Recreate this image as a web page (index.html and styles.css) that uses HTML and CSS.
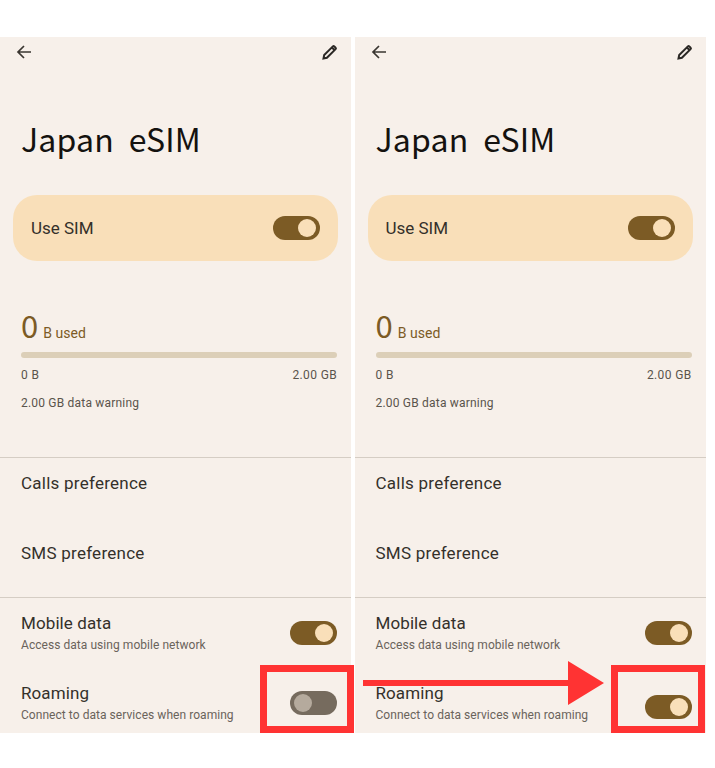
FILE: index.html
```html
<!DOCTYPE html>
<html lang="en">
<head>
    <meta charset="utf-8">
    <meta name="viewport" content="width=device-width, initial-scale=1.0">
    <title>Japan eSIM roaming</title>
    <link rel="stylesheet" href="styles.css">
</head>
<body>
    <div id="container">
        <div class="phone">
            <div class="top-bar">
                <svg class="icon" viewBox="0 0 16 16"><path d="M15 8H2M8 2L2 8l6 6"/></svg>
                <svg class="icon pencil" viewBox="0 0 16 16"><path d="M1.5 14.5l.7-3.4 8.7-8.7a1 1 0 0 1 1.4 0l1.3 1.3a1 1 0 0 1 0 1.4l-8.7 8.7zM10 3.6l2.4 2.4"/></svg>
            </div>
            <h1 class="title">Japan&nbsp; eSIM</h1>
            <div class="sim-card">
                <span class="sim-label">Use SIM</span>
                <div class="toggle on"><div class="knob"></div></div>
            </div>
            <div class="usage">
                <div class="used"><span class="used-num">0</span><span class="used-unit">B used</span></div>
                <div class="bar"></div>
                <div class="bar-labels"><span>0 B</span><span>2.00 GB</span></div>
                <div class="warning">2.00 GB data warning</div>
            </div>
            <div class="section">
                <div class="pref-row">Calls preference</div>
                <div class="pref-row">SMS preference</div>
            </div>
            <div class="section toggles">
                <div class="toggle-row">
                    <div class="row-text">
                        <div class="row-title">Mobile data</div>
                        <div class="row-sub">Access data using mobile network</div>
                    </div>
                    <div class="toggle on"><div class="knob"></div></div>
                </div>
                <div class="toggle-row">
                    <div class="row-text">
                        <div class="row-title">Roaming</div>
                        <div class="row-sub">Connect to data services when roaming</div>
                    </div>
                    <div class="toggle off"><div class="knob"></div></div>
                </div>
            </div>
            <div class="highlight left"></div>
        </div>
        <div class="phone">
            <div class="top-bar">
                <svg class="icon" viewBox="0 0 16 16"><path d="M15 8H2M8 2L2 8l6 6"/></svg>
                <svg class="icon pencil" viewBox="0 0 16 16"><path d="M1.5 14.5l.7-3.4 8.7-8.7a1 1 0 0 1 1.4 0l1.3 1.3a1 1 0 0 1 0 1.4l-8.7 8.7zM10 3.6l2.4 2.4"/></svg>
            </div>
            <h1 class="title">Japan&nbsp; eSIM</h1>
            <div class="sim-card">
                <span class="sim-label">Use SIM</span>
                <div class="toggle on"><div class="knob"></div></div>
            </div>
            <div class="usage">
                <div class="used"><span class="used-num">0</span><span class="used-unit">B used</span></div>
                <div class="bar"></div>
                <div class="bar-labels"><span>0 B</span><span>2.00 GB</span></div>
                <div class="warning">2.00 GB data warning</div>
            </div>
            <div class="section">
                <div class="pref-row">Calls preference</div>
                <div class="pref-row">SMS preference</div>
            </div>
            <div class="section toggles">
                <div class="toggle-row">
                    <div class="row-text">
                        <div class="row-title">Mobile data</div>
                        <div class="row-sub">Access data using mobile network</div>
                    </div>
                    <div class="toggle on"><div class="knob"></div></div>
                </div>
                <div class="toggle-row">
                    <div class="row-text">
                        <div class="row-title">Roaming</div>
                        <div class="row-sub">Connect to data services when roaming</div>
                    </div>
                    <div class="toggle on lowered"><div class="knob"></div></div>
                </div>
            </div>
            <div class="highlight right"></div>
        </div>
        <svg class="arrow" viewBox="0 0 241 44"><path d="M0 19H205V0L241 22L205 44V25H0z"/></svg>
    </div>
</body>
</html>
```

FILE: styles.css
```css
body {
    margin: 0;
    padding: 37px 0 0;
    background-color: #fff;
    font-family: Roboto, "Noto Sans", sans-serif;
    color: #34302a;
}

#container {
    position: relative;
    display: flex;
    gap: 3.5px;
    width: 706px;
}

.phone {
    position: relative;
    width: 351px;
    height: 696px;
    background-color: #f7f0ea;
}

.top-bar {
    display: flex;
    justify-content: space-between;
    padding: 7px 13px 0 16px;
}

.icon {
    width: 16px;
    height: 16px;
    fill: none;
    stroke: #3a3631;
    stroke-width: 1.7;
}

.icon.pencil {
    stroke: #2b2825;
    stroke-width: 2;
}

.title {
    margin: 0;
    padding: 55px 0 0 21px;
    font-family: "Noto Sans CJK JP", "Noto Sans", sans-serif;
    font-size: 32px;
    line-height: 46px;
    font-weight: 400;
    letter-spacing: 0.2px;
    color: #14120f;
}

.sim-card {
    display: flex;
    align-items: center;
    justify-content: space-between;
    height: 66px;
    margin: 34px 13px 0;
    padding: 0 18px;
    background-color: #f9dfb9;
    border-radius: 24px;
}

.sim-label {
    font-size: 17px;
}

.toggle {
    display: flex;
    align-items: center;
    width: 47px;
    height: 24px;
    padding: 0 4px;
    box-sizing: border-box;
    border-radius: 12px;
}

.toggle.on {
    justify-content: flex-end;
    background-color: #7c5b25;
}

.toggle.off {
    background-color: #766b5e;
}

.toggle .knob {
    width: 18px;
    height: 18px;
    border-radius: 50%;
    background-color: #f9dfb9;
}

.toggle.off .knob {
    background-color: #b5aa9d;
}

.toggle.lowered {
    margin-top: 8px;
}

.usage {
    height: 197px;
    padding: 0 14px 0 21px;
    box-sizing: border-box;
    border-bottom: 1px solid #d5cdc4;
}

.used {
    display: flex;
    align-items: baseline;
    padding-top: 44px;
    color: #7c5b25;
}

.used-num {
    font-size: 31px;
    line-height: 40px;
    font-family: "Noto Sans CJK JP", "Noto Sans", sans-serif;
}

.used-unit {
    margin-left: 5px;
    font-size: 14px;
    letter-spacing: 0.05px;
}

.bar {
    height: 6px;
    margin-top: 7px;
    border-radius: 3px;
    background-color: #dccfb8;
}

.bar-labels {
    display: flex;
    justify-content: space-between;
    margin-top: 10px;
    font-size: 12px;
    line-height: 14px;
    letter-spacing: 0.35px;
    color: #5a544c;
}

.warning {
    margin-top: 14px;
    font-size: 12px;
    line-height: 14px;
    letter-spacing: 0.2px;
    color: #5a544c;
}

.section {
    border-bottom: 1px solid #d5cdc4;
    height: 140px;
    box-sizing: border-box;
}

.section.toggles {
    border-bottom: none;
    height: auto;
}

.pref-row {
    height: 70px;
    padding: 15px 0 0 21px;
    box-sizing: border-box;
    font-size: 17px;
    line-height: 20px;
    letter-spacing: 0.25px;
}

.toggle-row {
    display: flex;
    align-items: center;
    justify-content: space-between;
    height: 70px;
    padding: 0 14px 0 21px;
}

.row-text {
    padding-bottom: 1px;
}

.row-title {
    font-size: 17px;
    line-height: 20px;
    letter-spacing: 0.1px;
}

.row-sub {
    margin-top: 4px;
    font-size: 12px;
    line-height: 16px;
    letter-spacing: 0.05px;
    color: #6a635b;
}

.highlight {
    position: absolute;
    bottom: 0;
    width: 94px;
    height: 68px;
    box-sizing: border-box;
    border: 7px solid #ff3333;
}

.highlight.left {
    right: -3px;
}

.highlight.right {
    right: 0.5px;
}

.arrow {
    position: absolute;
    left: 363px;
    top: 624px;
    width: 241px;
    height: 44px;
    fill: #ff3333;
}
```
